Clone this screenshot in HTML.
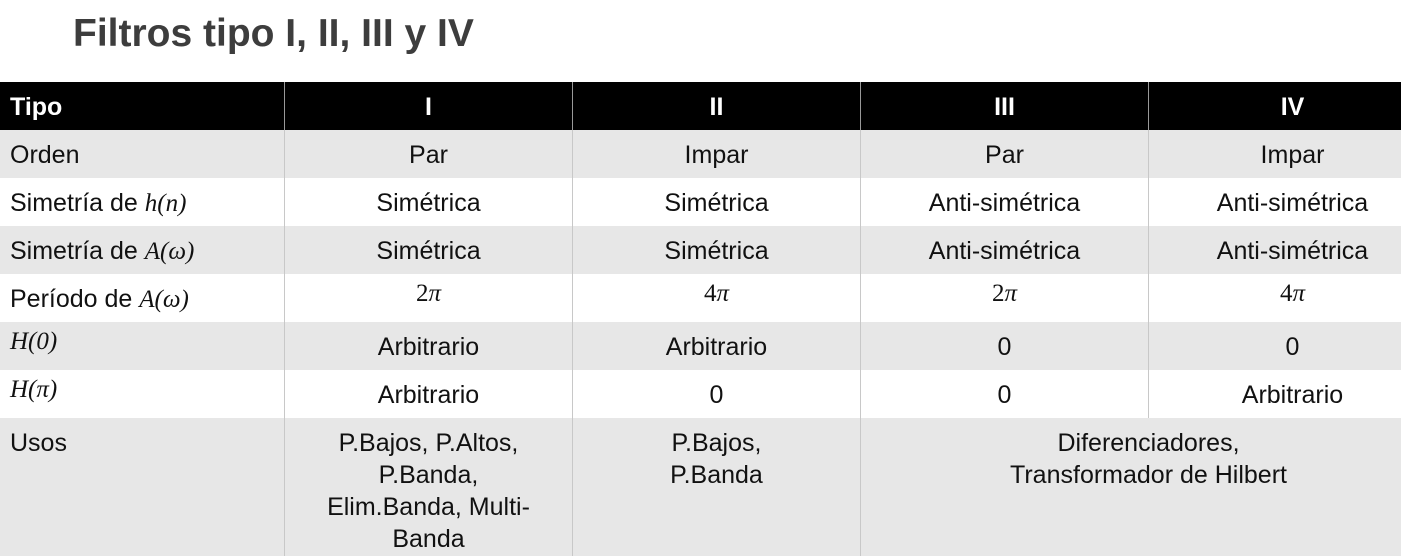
<!DOCTYPE html>
<html><head><meta charset="utf-8"><style>
body{margin:0;width:1401px;height:556px;background:#fff;overflow:hidden;font-family:"Liberation Sans",sans-serif;position:relative}
h1{position:absolute;left:73px;top:12px;margin:0;font-size:39px;font-weight:bold;color:#3d3d3d;letter-spacing:0px}
.r{position:absolute;left:0;width:1401px;overflow:hidden}
.c{position:absolute;top:0;height:100%;box-sizing:border-box;font-size:25px;color:#111;text-align:center;line-height:32px;padding-top:9px}
.c.l{text-align:left;padding-left:10px}
.b{border-left:1px solid #c8c8c8}
.h .c{color:#fff;font-weight:bold;font-size:25px}
.h .b{border-left-color:#999}
i{font-family:"Liberation Serif",serif;font-size:25px}
.m{font-family:"Liberation Serif",serif;padding-top:4px}
</style></head><body>
<h1>Filtros tipo I, II, III y IV</h1>
<div class="r h" style="top:82px;height:48px;background:#000">
<div class="c l" style="left:0;width:284px">Tipo</div><div class="c b" style="left:284px;width:288px">I</div><div class="c b" style="left:572px;width:288px">II</div><div class="c b" style="left:860px;width:288px">III</div><div class="c b" style="left:1148px;width:288px">IV</div></div>
<div class="r" style="top:130px;height:48px;background:#e7e7e7">
<div class="c l" style="left:0;width:284px">Orden</div><div class="c b" style="left:284px;width:288px">Par</div><div class="c b" style="left:572px;width:288px">Impar</div><div class="c b" style="left:860px;width:288px">Par</div><div class="c b" style="left:1148px;width:288px">Impar</div></div>
<div class="r" style="top:178px;height:48px;background:#fff">
<div class="c l" style="left:0;width:284px">Simetría de <i>h(n)</i></div><div class="c b" style="left:284px;width:288px">Simétrica</div><div class="c b" style="left:572px;width:288px">Simétrica</div><div class="c b" style="left:860px;width:288px">Anti-simétrica</div><div class="c b" style="left:1148px;width:288px">Anti-simétrica</div></div>
<div class="r" style="top:226px;height:48px;background:#e7e7e7">
<div class="c l" style="left:0;width:284px">Simetría de <i>A(ω)</i></div><div class="c b" style="left:284px;width:288px">Simétrica</div><div class="c b" style="left:572px;width:288px">Simétrica</div><div class="c b" style="left:860px;width:288px">Anti-simétrica</div><div class="c b" style="left:1148px;width:288px">Anti-simétrica</div></div>
<div class="r" style="top:274px;height:48px;background:#fff">
<div class="c l" style="left:0;width:284px">Período de <i>A(ω)</i></div><div class="c b m" style="left:284px;width:288px">2<i>π</i></div><div class="c b m" style="left:572px;width:288px">4<i>π</i></div><div class="c b m" style="left:860px;width:288px">2<i>π</i></div><div class="c b m" style="left:1148px;width:288px">4<i>π</i></div></div>
<div class="r" style="top:322px;height:48px;background:#e7e7e7">
<div class="c l m" style="left:0;width:284px"><i>H(0)</i></div><div class="c b" style="left:284px;width:288px">Arbitrario</div><div class="c b" style="left:572px;width:288px">Arbitrario</div><div class="c b" style="left:860px;width:288px">0</div><div class="c b" style="left:1148px;width:288px">0</div></div>
<div class="r" style="top:370px;height:48px;background:#fff">
<div class="c l m" style="left:0;width:284px"><i>H(π)</i></div><div class="c b" style="left:284px;width:288px">Arbitrario</div><div class="c b" style="left:572px;width:288px">0</div><div class="c b" style="left:860px;width:288px">0</div><div class="c b" style="left:1148px;width:288px">Arbitrario</div></div>
<div class="r" style="top:418px;height:138px;background:#e7e7e7">
<div class="c l" style="left:0;width:284px">Usos</div><div class="c b" style="left:284px;width:288px">P.Bajos, P.Altos,<br>P.Banda,<br>Elim.Banda, Multi-<br>Banda</div><div class="c b" style="left:572px;width:288px">P.Bajos,<br>P.Banda</div><div class="c b" style="left:860px;width:576px">Diferenciadores,<br>Transformador de Hilbert</div></div>
</body></html>
